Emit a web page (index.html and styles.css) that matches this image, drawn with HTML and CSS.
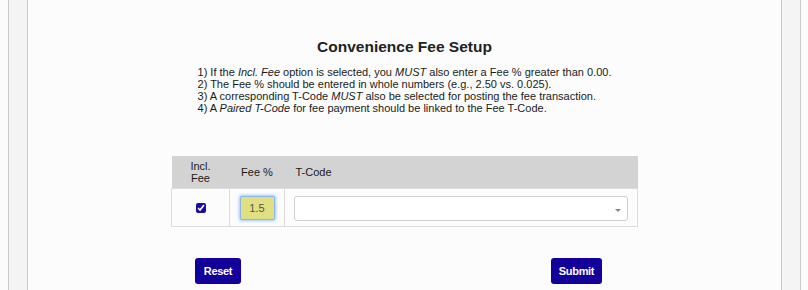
FILE: index.html
```html
<!DOCTYPE html>
<html lang="en">
<head>
    <meta charset="UTF-8">
    <meta name="viewport" content="width=device-width, initial-scale=1.0">
    <title>Convenience Fee Setup</title>
    <link rel="stylesheet" href="styles.css">
</head>
<body>
    <div class="frame">
        <div class="content">
            <h1>Convenience Fee Setup</h1>
            <div class="notes">
                <p>1) If the <em>Incl. Fee</em> option is selected, you <em>MUST</em> also enter a Fee % greater than 0.00.</p>
                <p>2) The Fee % should be entered in whole numbers (e.g., 2.50 vs. 0.025).</p>
                <p>3) A corresponding T-Code <em>MUST</em> also be selected for posting the fee transaction.</p>
                <p>4) A <em>Paired T-Code</em> for fee payment should be linked to the Fee T-Code.</p>
            </div>

            <table class="fees">
                <thead>
                    <tr>
                        <th class="col-incl">Incl.<br>Fee</th>
                        <th class="col-fee">Fee %</th>
                        <th class="col-tcode">T-Code</th>
                    </tr>
                </thead>
                <tbody>
                    <tr>
                        <td class="col-incl"><input type="checkbox" checked></td>
                        <td class="col-fee"><input type="text" class="fee-input" value="1.5"></td>
                        <td class="col-tcode">
                            <div class="select">
                                <span class="caret"></span>
                            </div>
                        </td>
                    </tr>
                </tbody>
            </table>

            <div class="actions">
                <button id="reset">Reset</button>
                <button id="submit">Submit</button>
            </div>
        </div>
    </div>
</body>
</html>
```

FILE: styles.css
```css
body {
    margin: 0;
    background: #fbfbfb;
    font-family: 'Liberation Sans', Arial, sans-serif;
    color: #222;
}

.frame {
    margin: 0 7px 0 8px;
    height: 290px;
    padding: 0 18px;
    background: #f4f4f4;
    border-left: 1px solid #c9c9c9;
    border-right: 1px solid #c9c9c9;
}

.content {
    height: 100%;
    background: #fcfcfc;
    border-left: 1px solid #c9c9c9;
    border-right: 1px solid #c9c9c9;
    text-align: center;
}

h1 {
    margin: 0;
    padding-top: 38px;
    font-size: 15.5px;
    line-height: 18px;
    color: #222;
}

.notes {
    display: inline-block;
    text-align: left;
    margin-top: 10px;
    font-size: 11px;
    line-height: 12px;
    color: #1a1a1a;
}

.notes p {
    margin: 0;
}

.fees {
    width: 467px;
    margin: 40px auto 0;
    border-collapse: collapse;
    font-size: 11px;
}

.fees th {
    background: #d3d3d3;
    font-weight: normal;
    height: 32px;
    padding: 0;
    line-height: 12px;
    color: #1a1a1a;
}

.fees td {
    height: 37px;
    padding: 0;
    border: 1px solid #dcdcdc;
}

.col-incl {
    width: 57px;
}

.col-fee {
    width: 54px;
}

.fees th.col-tcode {
    text-align: left;
    padding-left: 11px;
}

.fees td.col-tcode {
    padding: 0 9px 0 9px;
}

.fees input[type="checkbox"] {
    width: 10px;
    height: 10px;
    margin: 3px 0 0;
    accent-color: #1a0ca3;
}

.fee-input {
    box-sizing: border-box;
    width: 35px;
    height: 24px;
    margin-top: 1px;
    border: 1px solid #8bb6ee;
    border-radius: 2px;
    background: #e0e082;
    box-shadow: 0 0 3px 1px #9cc6ff;
    font-family: 'Liberation Sans', Arial, sans-serif;
    font-size: 11px;
    color: #555;
    text-align: center;
    padding: 0;
    outline: none;
}

.select {
    position: relative;
    height: 23px;
    margin-top: 1px;
    border: 1px solid #cfcfcf;
    border-radius: 3px;
    background: #fff;
}

.caret {
    position: absolute;
    right: 6px;
    top: 12px;
    border-left: 3px solid transparent;
    border-right: 3px solid transparent;
    border-top: 3px solid #888;
}

.actions {
    display: flex;
    justify-content: space-between;
    width: 467px;
    box-sizing: border-box;
    margin: 31px auto 0;
    padding: 0 36px 0 24px;
}

button {
    height: 26px;
    border: none;
    border-radius: 3px;
    background: #13009a;
    color: #fff;
    font-family: 'Liberation Sans', Arial, sans-serif;
    font-size: 11px;
    font-weight: bold;
    letter-spacing: -0.3px;
    cursor: pointer;
}

#reset {
    width: 46px;
}

#submit {
    width: 51px;
}
```
